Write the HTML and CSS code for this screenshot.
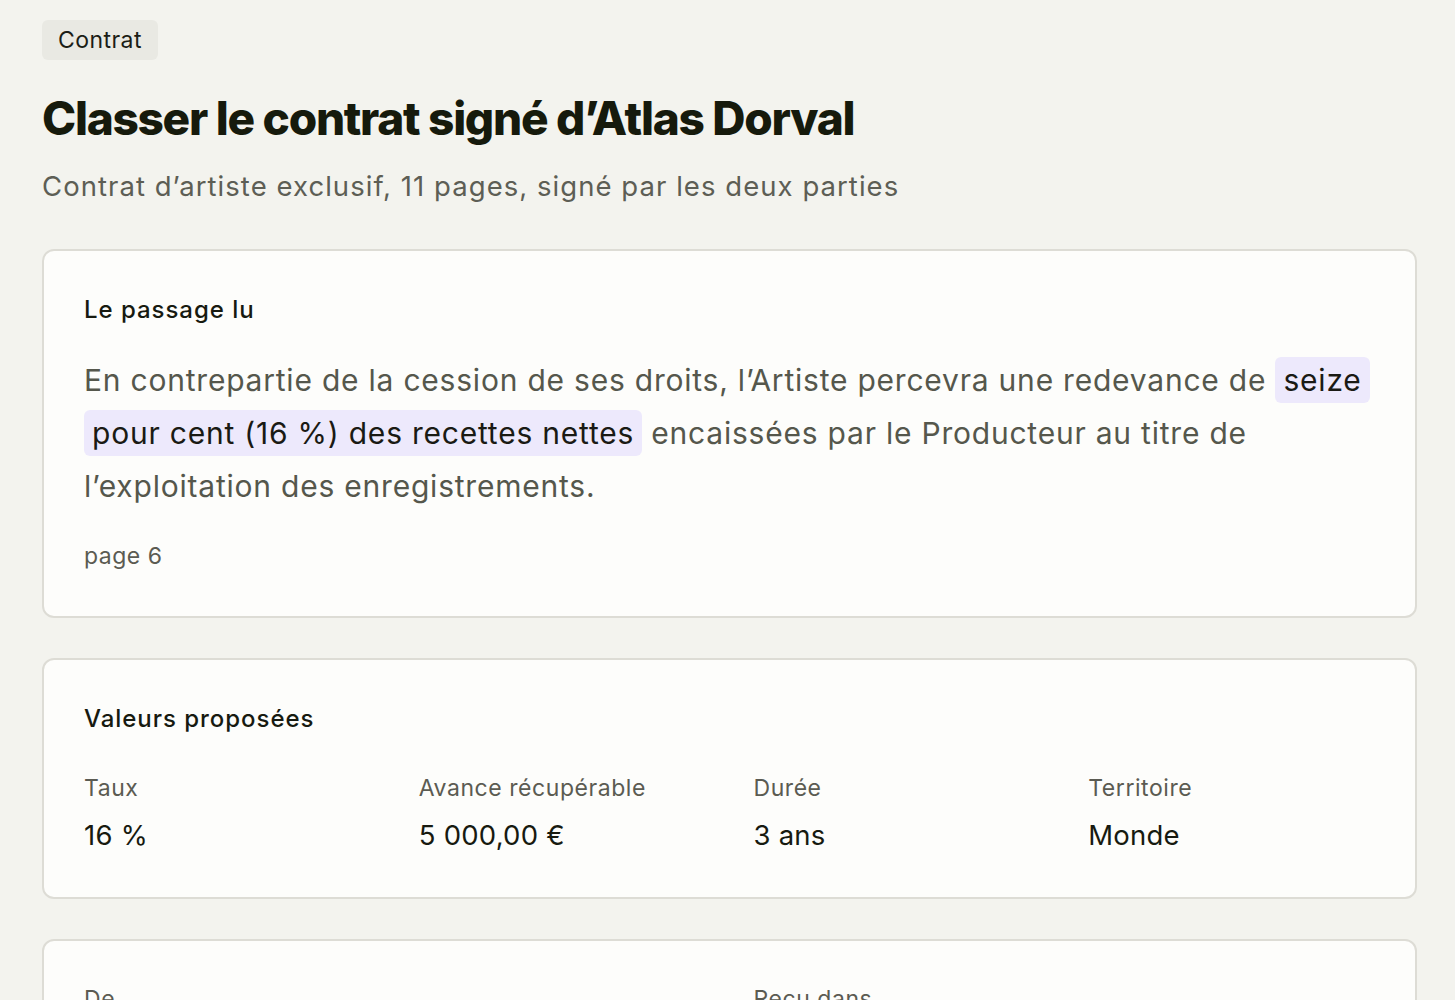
FILE: index.html
```html
<!DOCTYPE html>
<html lang="fr">
<head>
  <meta charset="UTF-8" />
  <meta name="viewport" content="width=device-width, initial-scale=1.0"/>
  <title>Classer le contrat signé d’Atlas Dorval</title>
  <link rel="stylesheet" href="styles.css">
</head>
<body>
  <!-- Page -->
  <main class="page">
    <span class="tag">Contrat</span>
    <h1 class="title">Classer le contrat signé d’Atlas Dorval</h1>
    <p class="subtitle">Contrat d’artiste exclusif, 11 pages, signé par les deux parties</p>

    <!-- Extracted passage -->
    <section class="card">
      <h2 class="card-title">Le passage lu</h2>
      <p class="passage">En contrepartie de la cession de ses droits, l’Artiste percevra une redevance de <mark class="hl">seize pour cent (16&nbsp;%) des recettes nettes</mark> encaissées par le Producteur au titre de l’exploitation des enregistrements.</p>
      <p class="page-ref">page 6</p>
    </section>

    <!-- Proposed values -->
    <section class="card">
      <h2 class="card-title">Valeurs proposées</h2>
      <div class="fields fields-4">
        <div class="field">
          <span class="field-label">Taux</span>
          <span class="field-value">16&nbsp;%</span>
        </div>
        <div class="field">
          <span class="field-label">Avance récupérable</span>
          <span class="field-value">5&nbsp;000,00&nbsp;€</span>
        </div>
        <div class="field">
          <span class="field-label">Durée</span>
          <span class="field-value">3 ans</span>
        </div>
        <div class="field">
          <span class="field-label">Territoire</span>
          <span class="field-value">Monde</span>
        </div>
      </div>
    </section>

    <!-- Source -->
    <section class="card">
      <div class="fields fields-2">
        <div class="field">
          <span class="field-label">De</span>
          <span class="field-value">Atlas Dorval</span>
        </div>
        <div class="field">
          <span class="field-label">Reçu dans</span>
          <span class="field-value">Boîte de réception</span>
        </div>
      </div>
    </section>
  </main>
</body>
</html>
```

FILE: styles.css
```css
/* Global page styling */
html, body {
  margin: 0;
  padding: 0;
  background: #f3f3ee;
  font-family: 'Inter', 'Liberation Sans', sans-serif;
  color: #171a10;
}

.page {
  padding: 20px 38px 40px 42px;
}

/* Header */
.tag {
  display: inline-block;
  background: #e9e9e3;
  color: #1b1d16;
  font-size: 23px;
  line-height: 40px;
  letter-spacing: 0.019em;
  padding: 0 16px;
  border-radius: 6px;
}

.title {
  margin: 30px 0 0;
  font-size: 46px;
  font-weight: 800;
  line-height: 56px;
  letter-spacing: -0.028em;
  color: #161a0c;
}

.subtitle {
  margin: 22px 0 45px;
  font-size: 27.5px;
  line-height: 36px;
  letter-spacing: 0.038em;
  color: #5d5e55;
}

/* Cards */
.card {
  background: #fdfdfb;
  border: 2px solid #dddcd5;
  border-radius: 12px;
  padding: 42px 40px 44px;
  margin-top: 40px;
}

.card-title {
  margin: 0;
  font-size: 24px;
  font-weight: 500;
  line-height: 34px;
  letter-spacing: 0.04em;
  color: #171a10;
}

.passage {
  margin: 27px 0 0;
  font-size: 30px;
  line-height: 53px;
  letter-spacing: 0.026em;
  color: #55574c;
}

.hl {
  background: #ede9fc;
  color: #1a1a14;
  padding: 5px 8px;
  border-radius: 6px;
  -webkit-box-decoration-break: clone;
  box-decoration-break: clone;
}

.page-ref {
  margin: 27px 0 0;
  font-size: 23px;
  line-height: 32px;
  letter-spacing: 0.022em;
  color: #5b5b52;
}

/* Field grids */
.fields {
  display: grid;
  column-gap: 48px;
  margin-top: 36px;
}

.card > .fields:first-child {
  margin-top: 0;
}

.fields-4 {
  grid-template-columns: repeat(4, 1fr);
}

.fields-2 {
  grid-template-columns: repeat(2, 1fr);
}

.field {
  display: flex;
  flex-direction: column;
  gap: 13px;
}

.field-label {
  font-size: 23px;
  line-height: 32px;
  letter-spacing: 0.024em;
  color: #5b5b52;
}

.field-value {
  font-size: 27.5px;
  line-height: 36px;
  letter-spacing: 0.008em;
  color: #171a10;
}
```
